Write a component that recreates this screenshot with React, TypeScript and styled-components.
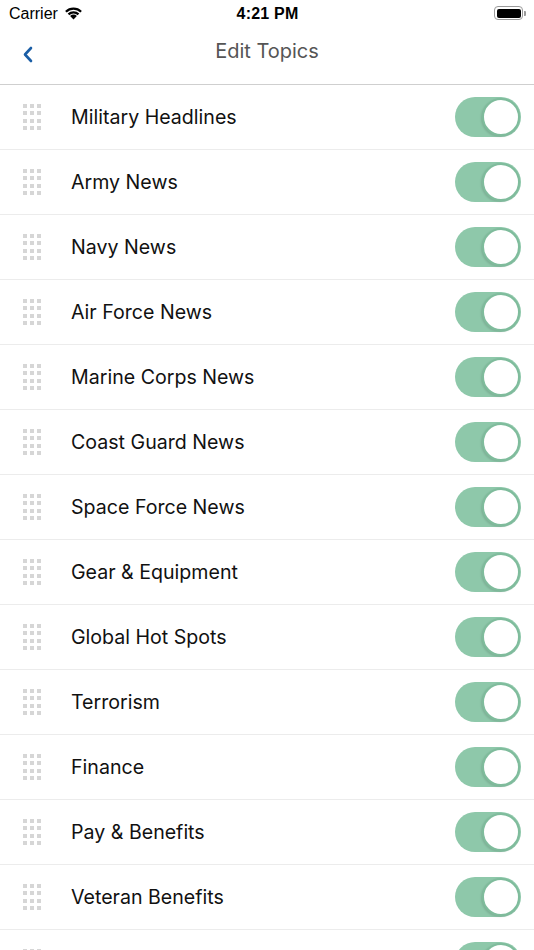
import { useState } from 'react';
import styled, { createGlobalStyle } from 'styled-components';

const GlobalStyle = createGlobalStyle`
  html, body {
    margin: 0;
    padding: 0;
    background: #fff;
    height: 950px;
    overflow: hidden;
  }
  * { box-sizing: border-box; }
  body {
    font-family: Inter, Roboto, "Noto Sans", "Liberation Sans", sans-serif;
    -webkit-font-smoothing: antialiased;
  }
`;

const TOPICS = [
  'Military Headlines',
  'Army News',
  'Navy News',
  'Air Force News',
  'Marine Corps News',
  'Coast Guard News',
  'Space Force News',
  'Gear & Equipment',
  'Global Hot Spots',
  'Terrorism',
  'Finance',
  'Pay & Benefits',
  'Veteran Benefits',
  'Opinion',
];

const Screen = styled.div`
  width: 534px;
  height: 950px;
  overflow: hidden;
`;

const StatusBar = styled.div`
  height: 28px;
  display: grid;
  grid-template-columns: 1fr auto 1fr;
  align-items: center;
  padding: 0 8px 0 9px;
  color: #000;
`;

const Carrier = styled.div`
  display: flex;
  align-items: center;
  gap: 5px;
  font-size: 16px;
  font-family: "Liberation Sans", Roboto, sans-serif;
  & > svg {
    margin-top: -3px;
  }
`;

const Clock = styled.div`
  font-size: 16px;
  font-weight: 700;
  font-family: "Liberation Sans", Roboto, sans-serif;
  letter-spacing: 0.2px;
`;

const Battery = styled.div`
  justify-self: end;
  display: flex;
  align-items: center;
  gap: 1px;
  margin-top: -2px;
`;

const BatteryBody = styled.div`
  width: 29px;
  height: 14px;
  border: 1.5px solid #9a9a9a;
  border-radius: 4px;
  padding: 1.5px;
  & > div {
    width: 100%;
    height: 100%;
    background: #000;
    border-radius: 2px;
  }
`;

const BatteryCap = styled.div`
  width: 2px;
  height: 5px;
  background: #9a9a9a;
  border-radius: 0 1px 1px 0;
`;

const NavBar = styled.div`
  height: 57px;
  display: grid;
  grid-template-columns: 60px 1fr 60px;
  align-items: center;
  border-bottom: 1px solid #cfcfcf;
  padding-bottom: 10px;
`;

const BackButton = styled.button`
  border: 0;
  background: none;
  padding: 0 0 0 23px;
  margin-top: 6px;
  display: flex;
  align-items: center;
  cursor: pointer;
`;

const Title = styled.h1`
  margin: 0;
  text-align: center;
  font-size: 20px;
  font-weight: 400;
  color: #555;
`;

const List = styled.ul`
  list-style: none;
  margin: 0;
  padding: 0;
`;

const Row = styled.li`
  height: 65px;
  display: flex;
  align-items: center;
  padding: 0 13px 0 23px;
  border-bottom: 1.5px solid #ececec;
`;

const Handle = styled.div`
  display: grid;
  grid-template-columns: repeat(3, 4px);
  grid-template-rows: repeat(4, 4px);
  column-gap: 3px;
  row-gap: 3.5px;
  margin-right: 30px;
  & > span {
    background: #d6d6d6;
  }
`;

const Label = styled.span`
  flex: 1;
  font-size: 19.6px;
  color: #111;
`;

const Track = styled.button<{ $on: boolean }>`
  width: 66px;
  height: 40px;
  border: 0;
  padding: 1px;
  border-radius: 20px;
  background: ${(p) => (p.$on ? '#8ec8aa' : '#e4e4e4')};
  display: flex;
  justify-content: ${(p) => (p.$on ? 'flex-end' : 'flex-start')};
  align-items: center;
  cursor: pointer;
`;

const Knob = styled.span`
  width: 38px;
  height: 38px;
  border-radius: 50%;
  background: #fff;
  border: 2px solid #7fbc9c;
  box-shadow: -1px 1px 2px rgba(0, 0, 0, 0.12);
`;

function Toggle({ on, onClick }: { on: boolean; onClick: () => void }) {
  return (
    <Track $on={on} onClick={onClick}>
      <Knob />
    </Track>
  );
}

function WifiIcon() {
  return (
    <svg width="21" height="15" viewBox="0 0 20 15">
      <path d="M10 14.5 L6.6 11 A4.8 4.8 0 0 1 13.4 11 Z" fill="#000" />
      <path d="M4.2 8.6 A8.2 8.2 0 0 1 15.8 8.6 L14.2 10.2 A6 6 0 0 0 5.8 10.2 Z" fill="#000" />
      <path d="M1.6 6 A11.9 11.9 0 0 1 18.4 6 L16.8 7.6 A9.6 9.6 0 0 0 3.2 7.6 Z" fill="#000" />
    </svg>
  );
}

export default function App() {
  const [enabled, setEnabled] = useState<boolean[]>(TOPICS.map(() => true));

  const flip = (i: number) =>
    setEnabled((prev) => prev.map((v, j) => (j === i ? !v : v)));

  return (
    <Screen>
      <GlobalStyle />
      <StatusBar>
        <Carrier>
          Carrier
          <WifiIcon />
        </Carrier>
        <Clock>4:21 PM</Clock>
        <Battery>
          <BatteryBody>
            <div />
          </BatteryBody>
          <BatteryCap />
        </Battery>
      </StatusBar>
      <NavBar>
        <BackButton aria-label="Back">
          <svg width="10" height="17" viewBox="0 0 10 17">
            <path
              d="M8 2 L2 8.5 L8 15"
              fill="none"
              stroke="#1b5ea6"
              strokeWidth="2.6"
              strokeLinecap="round"
              strokeLinejoin="round"
            />
          </svg>
        </BackButton>
        <Title>Edit Topics</Title>
        <div />
      </NavBar>
      <List>
        {TOPICS.map((topic, i) => (
          <Row key={topic}>
            <Handle>
              {Array.from({ length: 12 }).map((_, k) => (
                <span key={k} />
              ))}
            </Handle>
            <Label>{topic}</Label>
            <Toggle on={enabled[i]} onClick={() => flip(i)} />
          </Row>
        ))}
      </List>
    </Screen>
  );
}
